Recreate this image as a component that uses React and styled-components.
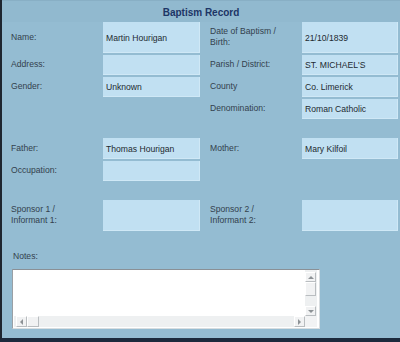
import React from "react";
import styled, { createGlobalStyle } from "styled-components";

const Global = createGlobalStyle`
  html, body {
    margin: 0;
    padding: 0;
    background: #1c2a3d;
  }
`;

const Panel = styled.main`
  width: 398px;
  height: 338px;
  background-color: #94bcd2;
  border-left: 2px solid #1e2630;
  border-bottom: 2px solid #1c2a3d;
  font-family: "Liberation Sans", Arial, sans-serif;
  font-size: 8.6px;
  color: #33414d;
  overflow: hidden;
`;

const Header = styled.h1`
  margin: 0;
  height: 22px;
  display: flex;
  align-items: center;
  justify-content: center;
  padding-top: 2px;
  font-size: 10px;
  font-weight: 700;
  color: #1d3566;
  background-color: #91b9cf;
  border-top: 1px solid #88afc5;
  box-sizing: border-box;
`;

const Grid = styled.div`
  display: grid;
  grid-template-columns: 101px 97px 102px 96px;
  grid-template-rows: 31px 20px 20px 20px 15px 21px 20px 15px 31px;
  row-gap: 2px;
`;

const Label = styled.div`
  display: flex;
  align-items: center;
  padding-left: ${(p) => (p.$right ? "10px" : "9px")};
  padding-bottom: 1px;
  line-height: 11px;
  white-space: pre-line;
`;

const Value = styled.div`
  display: flex;
  align-items: center;
  padding-left: 3px;
  background-color: #c1e0f2;
  color: #222a30;
  box-shadow: inset -1px -1px 0 #cfe8f6;
`;

const Blank = styled.div``;

const Spacer = styled.div`
  grid-column: 1 / -1;
`;

const Notes = styled.section`
  padding: 20px 0 0 10px;
`;

const NotesLabel = styled.div`
  padding-left: 1px;
  margin-bottom: 8px;
`;

const TextBox = styled.div`
  width: 308px;
  height: 60px;
  box-sizing: border-box;
  border: 1px solid #d8dde0;
  border-top-color: #8a9096;
  border-left-color: #9aa0a5;
  background: #ffffff;
  display: grid;
  grid-template-columns: 1fr 12px;
  grid-template-rows: 1fr 11px;
  padding: 0 2px 1px 1px;
`;

const Content = styled.div`
  background: #ffffff;
`;

const VBar = styled.div`
  display: flex;
  flex-direction: column;
  background: #eef0f1;
  padding-top: 2px;
`;

const HBar = styled.div`
  display: flex;
  background: #eef0f1;
`;

const Corner = styled.div`
  background: #f2f3f4;
`;

const Btn = styled.div`
  width: ${(p) => p.$w || 11}px;
  height: ${(p) => p.$h || 10}px;
  flex: none;
  box-sizing: border-box;
  background: #f1f2f3;
  border: 1px solid #ffffff;
  border-right-color: #b9bdc0;
  border-bottom-color: #b9bdc0;
  display: flex;
  align-items: center;
  justify-content: center;
  margin-left: ${(p) => p.$ml || 0}px;
`;

const Track = styled.div`
  flex: 1;
`;

const Arrow = ({ dir }) => {
  const pts = {
    up: "0,4 3,1 6,4",
    down: "0,1 3,4 6,1",
    left: "4,0 1,3 4,6",
    right: "1,0 4,3 1,6",
  }[dir];
  const vertical = dir === "up" || dir === "down";
  return (
    <svg width={vertical ? 6 : 5} height={vertical ? 5 : 6}>
      <polygon points={pts} fill="#8d9296" />
    </svg>
  );
};

const rows = [
  ["Name:", "Martin Hourigan", "Date of Baptism /\nBirth:", "21/10/1839"],
  ["Address:", "", "Parish / District:", "ST. MICHAEL'S"],
  ["Gender:", "Unknown", "County", "Co. Limerick"],
  [null, null, "Denomination:", "Roman Catholic"],
  "spacer",
  ["Father:", "Thomas Hourigan", "Mother:", "Mary Kilfoil"],
  ["Occupation:", "", null, null],
  "spacer",
  ["Sponsor 1 /\nInformant 1:", "", "Sponsor 2 /\nInformant 2:", ""],
];

const App = () => {
  return (
    <>
      <Global />
      <Panel>
        <Header>Baptism Record</Header>
        <Grid>
          {rows.map((row, i) =>
            row === "spacer" ? (
              <Spacer key={i} />
            ) : (
              <React.Fragment key={i}>
                {row[0] === null ? <Blank /> : <Label>{row[0]}</Label>}
                {row[1] === null ? <Blank /> : <Value>{row[1]}</Value>}
                {row[2] === null ? <Blank /> : <Label $right>{row[2]}</Label>}
                {row[3] === null ? <Blank /> : <Value>{row[3]}</Value>}
              </React.Fragment>
            )
          )}
        </Grid>
        <Notes>
          <NotesLabel>Notes:</NotesLabel>
          <TextBox>
            <Content />
            <VBar>
              <Btn $h={10}>
                <Arrow dir="up" />
              </Btn>
              <Btn $h={14} />
              <Track />
              <Btn $h={10}>
                <Arrow dir="down" />
              </Btn>
            </VBar>
            <HBar>
              <Btn $w={11} $h={11} $ml={2}>
                <Arrow dir="left" />
              </Btn>
              <Btn $w={12} $h={11} />
              <Track />
              <Btn $w={11} $h={11}>
                <Arrow dir="right" />
              </Btn>
            </HBar>
            <Corner />
          </TextBox>
        </Notes>
      </Panel>
    </>
  );
};

export default App;
